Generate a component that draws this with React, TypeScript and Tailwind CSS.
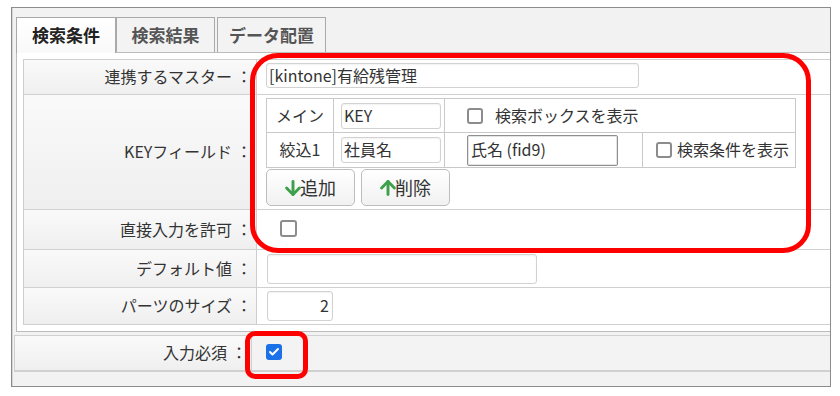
import React from "react";
import { ArrowDown, ArrowUp, Check } from "lucide-react";

const Box = ({ big = false }: { big?: boolean }) => (
  <span
    className={
      big
        ? "inline-block w-[17px] h-[17px] rounded-[3px] border-2 border-[#8c8c8c] bg-white shrink-0"
        : "inline-block w-[16px] h-[16px] rounded-[3px] border-2 border-[#8c8c8c] bg-white shrink-0"
    }
  />
);

const Label = ({ children }: { children: React.ReactNode }) => (
  <div className="w-[234px] shrink-0 border-l border-r border-[#cdcdcd] bg-linear-to-b from-[#fafafa] to-[#efefef] flex items-center justify-end pr-[4px] text-[16px] text-[#333] whitespace-nowrap">
    <span>{children}</span>
    <span className="ml-[4px]">：</span>
  </div>
);

const Field = ({
  w,
  h,
  children,
  right = false,
}: {
  w: string;
  h: string;
  children?: React.ReactNode;
  right?: boolean;
}) => (
  <div
    className={`${w} ${h} ${right ? "justify-end pr-[3px]" : "pl-[2px]"} flex items-center border border-[#d2d2d2] rounded-[3px] bg-white shadow-[inset_0_1px_2px_rgba(0,0,0,0.06)] text-[16px] text-[#333] whitespace-nowrap`}
  >
    {children}
  </div>
);

const Btn = ({ up, children }: { up?: boolean; children: React.ReactNode }) => (
  <div className="w-[89px] h-[37px] flex items-center justify-center rounded-[5px] border border-[#bdbdbd] bg-linear-to-b from-white to-[#f1f1f1] text-[18px] text-[#333]">
    {up ? (
      <ArrowUp size={22} strokeWidth={3.2} className="text-[#3fa04c] -ml-[3px] -mr-[4px]" />
    ) : (
      <ArrowDown size={22} strokeWidth={3.2} className="text-[#3fa04c] -ml-[3px] -mr-[4px]" />
    )}
    <span>{children}</span>
  </div>
);

export default function App() {
  return (
    <div className="relative w-[840px] h-[396px] bg-white pt-[7px] pl-[11px] overflow-hidden font-['Noto_Sans_CJK_JP','Noto_Sans',sans-serif] leading-[1.2]">
      <div className="w-[820px] h-[380px] border border-[#8c8c8c] bg-[#f2f2f2] overflow-hidden">
        <div className="h-full border-l border-[#d6d6d6] flex flex-col">
          {/* tabs */}
          <div className="flex items-start pl-[3px] mt-[9px] relative z-10">
            <div className="w-[100px] h-[36px] -mb-px flex items-center justify-center border border-b-0 border-[#a9a9a9] bg-linear-to-b from-white to-[#f9f9f9] text-[17px] font-bold text-[#222]">
              検索条件
            </div>
            <div className="w-[99px] h-[35px] flex items-center justify-center border border-b-0 border-[#a9a9a9] bg-[#f3f3f3] text-[17px] font-bold text-[#555]">
              検索結果
            </div>
            <div className="ml-[2px] w-[109px] h-[35px] flex items-center justify-center border border-b-0 border-[#a9a9a9] bg-[#f3f3f3] text-[17px] font-bold text-[#555]">
              データ配置
            </div>
          </div>

          {/* panel */}
          <div className="ml-[3px] border-t border-l border-b border-[#bcbcbc] bg-white pt-[6px] pl-[6px] pb-[6px]">
            <div className="flex flex-col">
              {/* row 1 */}
              <div className="flex h-[35px] border-t border-[#d0d0d0]">
                <Label>連携するマスター</Label>
                <div className="flex-1 flex items-start pt-[3px] pl-[9px]">
                  <Field w="w-[373px]" h="h-[25px]">
                    [kintone]有給残管理
                  </Field>
                </div>
              </div>
              {/* row 2 */}
              <div className="flex h-[115px] border-t border-[#d0d0d0]">
                <Label>KEYフィールド</Label>
                <div className="flex-1 flex flex-col pt-[3px] pl-[9px]">
                  <div className="w-[530px] border border-[#c9c9c9] text-[16px] text-[#333]">
                    <div className="flex h-[34px] border-b border-[#c9c9c9]">
                      <div className="w-[67px] border-r border-[#c9c9c9] flex items-center justify-center">
                        メイン
                      </div>
                      <div className="w-[111px] border-r border-[#c9c9c9] flex items-center pl-[7px]">
                        <Field w="w-[100px]" h="h-[26px]">
                          KEY
                        </Field>
                      </div>
                      <div className="flex-1 flex items-center pl-[22px] gap-[12px]">
                        <Box />
                        <span>検索ボックスを表示</span>
                      </div>
                    </div>
                    <div className="flex h-[34px]">
                      <div className="w-[67px] border-r border-[#c9c9c9] flex items-center justify-center">
                        絞込1
                      </div>
                      <div className="w-[111px] border-r border-[#c9c9c9] flex items-center pl-[7px]">
                        <Field w="w-[100px]" h="h-[26px]">
                          社員名
                        </Field>
                      </div>
                      <div className="w-[198px] border-r border-[#c9c9c9] flex items-center pl-[22px]">
                        <div className="w-[151px] h-[31px] flex items-center pl-[3px] border border-[#8f8f8f] rounded-[2px] bg-white shadow-[inset_0_0_0_1px_#e4e4e4] whitespace-nowrap">
                          氏名 (fid9)
                        </div>
                      </div>
                      <div className="flex-1 flex items-center pl-[13px] gap-[5px] whitespace-nowrap">
                        <Box />
                        <span>検索条件を表示</span>
                      </div>
                    </div>
                  </div>
                  <div className="flex gap-[6px] mt-[1px]">
                    <Btn>追加</Btn>
                    <Btn up>削除</Btn>
                  </div>
                </div>
              </div>
              {/* row 3 */}
              <div className="flex h-[40px] border-t border-[#d0d0d0]">
                <Label>直接入力を許可</Label>
                <div className="flex-1 flex items-center pl-[23px] pb-[2px]">
                  <Box big />
                </div>
              </div>
              {/* row 4 */}
              <div className="flex h-[38px] border-t border-[#d0d0d0]">
                <Label>デフォルト値</Label>
                <div className="flex-1 flex items-center pl-[10px]">
                  <Field w="w-[270px]" h="h-[30px]" />
                </div>
              </div>
              {/* row 5 */}
              <div className="flex h-[38px] border-t border-b border-[#d0d0d0]">
                <Label>パーツのサイズ</Label>
                <div className="flex-1 flex items-center pl-[10px]">
                  <Field w="w-[66px]" h="h-[30px]" right>
                    2
                  </Field>
                </div>
              </div>
            </div>
          </div>

          {/* required row */}
          <div className="ml-[1px] mt-[3px] flex h-[37px] border-t border-b-2 border-[#d0d0d0]">
            <div className="w-[238px] shrink-0 border-l border-r border-[#d0d0d0] bg-linear-to-b from-[#fafafa] to-[#efefef] flex items-center justify-end pr-[4px] text-[16px] text-[#333] whitespace-nowrap">
              <span>入力必須</span>
              <span className="ml-[4px]">：</span>
            </div>
            <div className="flex-1 bg-[#f3f3f3] flex items-center pl-[14px] pb-[3px]">
              <span className="w-[16px] h-[16px] rounded-[3px] bg-[#1b72e8] flex items-center justify-center">
                <Check size={12} strokeWidth={4} className="text-white" />
              </span>
            </div>
          </div>
        </div>
      </div>

      {/* red highlight overlays */}
      <div className="absolute left-[250px] top-[53px] w-[561px] h-[200px] border-[5px] border-[#ff0000] rounded-[28px] pointer-events-none" />
      <div className="absolute left-[245px] top-[331px] w-[63px] h-[48px] border-[5px] border-[#ff0000] rounded-[10px] pointer-events-none" />
    </div>
  );
}
